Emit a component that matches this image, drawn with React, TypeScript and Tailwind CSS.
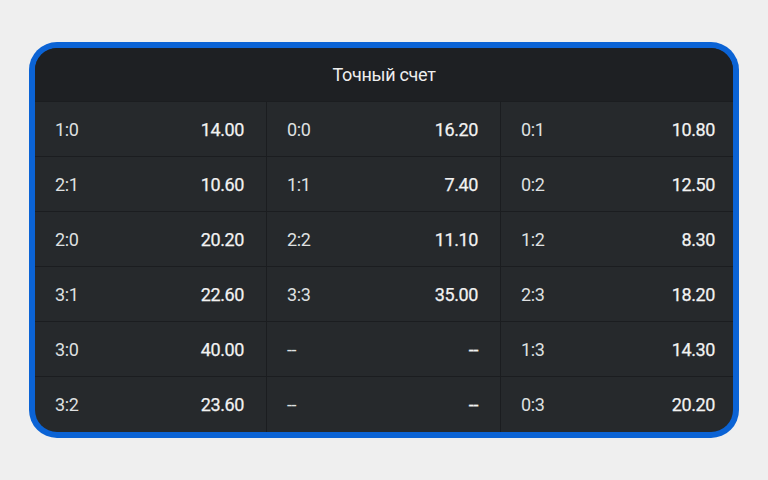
const columns: [string, string][][] = [
  [
    ["1:0", "14.00"],
    ["2:1", "10.60"],
    ["2:0", "20.20"],
    ["3:1", "22.60"],
    ["3:0", "40.00"],
    ["3:2", "23.60"],
  ],
  [
    ["0:0", "16.20"],
    ["1:1", "7.40"],
    ["2:2", "11.10"],
    ["3:3", "35.00"],
    ["--", "--"],
    ["--", "--"],
  ],
  [
    ["0:1", "10.80"],
    ["0:2", "12.50"],
    ["1:2", "8.30"],
    ["2:3", "18.20"],
    ["1:3", "14.30"],
    ["0:3", "20.20"],
  ],
];

function Cell({ label, odd, last }: { label: string; odd: string; last: boolean }) {
  return (
    <div
      className={`flex h-[55px] items-center justify-between border-b border-[#1b1d20] pl-5 text-[18px] tracking-[-0.4px] last:border-b-0 ${
        last ? "pr-[18px]" : "pr-[22px]"
      }`}
    >
      <span className="text-[#dfe0e1]">{label}</span>
      <span className="text-[#f2f2f2] [-webkit-text-stroke:0.25px_#f2f2f2]">{odd}</span>
    </div>
  );
}

export default function App() {
  return (
    <div className="flex h-[480px] w-[768px] items-start justify-center bg-[#efefef] pt-[42px] font-['Roboto',sans-serif]">
      <div className="w-[710px] rounded-[28px] bg-[#0b63d5] p-[6px]">
        <div className="overflow-hidden rounded-[22px] bg-[#26292c]">
          <div className="flex h-[54px] items-center justify-center border-b border-[#1b1d20] bg-[#1e2023] text-[18px] tracking-[-0.3px] text-[#eeeeee]">
            Точный счет
          </div>
          <div className="grid grid-cols-[232px_234px_1fr]">
            {columns.map((col, i) => (
              <div key={i} className="flex flex-col border-r border-[#1b1d20] last:border-r-0">
                {col.map(([label, odd], j) => (
                  <Cell key={j} label={label} odd={odd} last={i === 2} />
                ))}
              </div>
            ))}
          </div>
        </div>
      </div>
    </div>
  );
}
